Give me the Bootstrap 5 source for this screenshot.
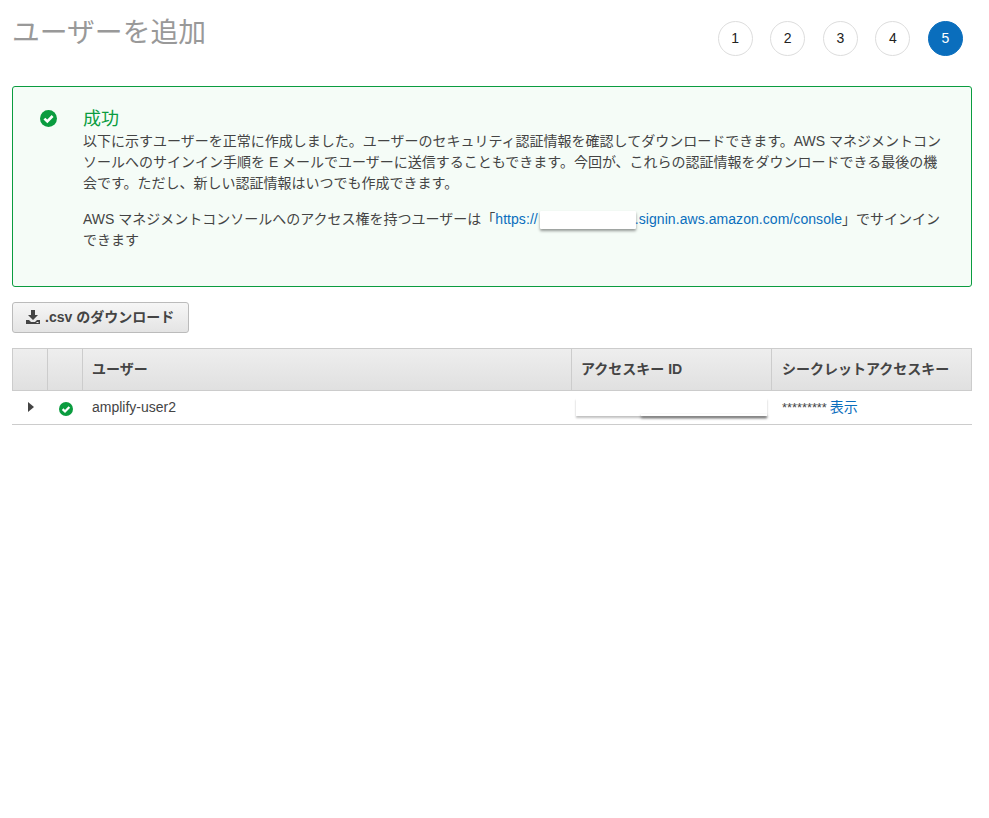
<!DOCTYPE html>
<html lang="ja">
<head>
<meta charset="utf-8">
<title>ユーザーを追加</title>
<link href="https://cdn.jsdelivr.net/npm/bootstrap@5.3.0/dist/css/bootstrap.min.css" rel="stylesheet">
<style>
body{font-family:"Liberation Sans","Noto Sans CJK JP",sans-serif;color:#444;font-size:14px;line-height:21px;background:#fff;}
.page-wrap{padding:0 17px 0 12px;}
.page-head{height:86px;}
.page-title{font-family:"Liberation Sans","Noto Sans CJK JP",sans-serif;font-size:27.8px;line-height:32px;font-weight:400;color:#999;margin:17px 0 0;}
.steps{gap:17.6px;margin:21px 9px 0 0;}
.step-dot{width:35px;height:35px;border-radius:50%;border:1px solid #ddd;background:#fff;color:#222;font-size:14px;}
.step-dot.on{background:#0a6ebd;border-color:#0a6ebd;color:#fff;}
.ok-box{height:201px;border:1px solid #0a9c3f;border-radius:3px;background:#f5fcf7;padding:20px 20px 0 0;}
.ok-icon{width:70px;padding:2px 0 0 27px;flex:none;margin-top:-2px;}
.ok-title{color:#0a9c3f;font-size:18px;line-height:24px;}
.ok-copy{margin:0 0 15px;width:860px;}
.aws-link{color:#0a6ebd;text-decoration:none;}
.url-link{letter-spacing:.06px;}
.mask-url{display:inline-block;width:96px;height:18px;margin:0 -1px 0 2px;background:#fff;vertical-align:-5px;box-shadow:0 2px 3px rgba(0,0,0,.4);border-radius:1px;}
.dl-btn{width:177px;height:31px;margin:15px 0;padding:0 0 0 12px;border:1px solid #bbb;border-radius:3px;background:linear-gradient(#f6f6f6,#e4e4e4);color:#444;font-size:14px;font-weight:700;}
.user-table{width:960px;table-layout:fixed;border-collapse:separate;border-spacing:0;margin:0;}
.col-a{width:36px;}
.col-b{width:35px;}
.col-c{width:489px;}
.col-d,.col-e{width:200px;}
.user-table th{height:43px;padding:0 10px;border:1px solid #ccc;border-left:0;background:linear-gradient(#eee,#e0e0e0);color:#444;font-weight:700;vertical-align:middle;}
.user-table th:first-child{border-left:1px solid #ccc;}
.user-table td{height:34px;padding:0 10px;border:0;border-bottom:1px solid #ccc;vertical-align:middle;color:#444;}
.user-table td.c-icon{padding:0;text-align:center;}
.user-table td.c-icon svg,.user-table td.c-icon .caret-r{margin-top:2px;}
.user-table td.c-icon .caret-r{margin-left:2px;}
.user-table .c-name{padding-left:9px;}
.key-wrap{position:relative;}
.mask-key{position:absolute;left:-5px;top:-10px;width:191px;height:18px;background:#fff;box-shadow:0 2px 2px rgba(0,0,0,.25);}
.mask-key::after{content:"";position:absolute;left:65px;right:0;bottom:0;height:2px;box-shadow:0 2px 3px rgba(0,0,0,.6);}
.stars{font-size:12.8px;margin-right:-1px;}
.caret-r{display:inline-block;border-style:solid;border-width:5px 0 5px 6px;border-color:transparent transparent transparent #444;}
</style>
</head>
<body>
<div class="page-wrap">
  <div class="page-head d-flex justify-content-between align-items-start">
    <h1 class="page-title">ユーザーを追加</h1>
    <div class="steps d-flex">
      <div class="step-dot d-flex align-items-center justify-content-center">1</div>
      <div class="step-dot d-flex align-items-center justify-content-center">2</div>
      <div class="step-dot d-flex align-items-center justify-content-center">3</div>
      <div class="step-dot d-flex align-items-center justify-content-center">4</div>
      <div class="step-dot on d-flex align-items-center justify-content-center">5</div>
    </div>
  </div>
  <div class="ok-box d-flex">
    <div class="ok-icon">
      <svg width="17" height="17" viewBox="0 0 17 17"><circle cx="8.5" cy="8.5" r="8.5" fill="#0a9c3f"/><path d="M4.4 8.6l2.9 2.9 5.3-5.5" fill="none" stroke="#fff" stroke-width="2.6"/></svg>
    </div>
    <div>
      <div class="ok-title">成功</div>
      <p class="ok-copy">以下に示すユーザーを正常に作成しました。ユーザーのセキュリティ認証情報を確認してダウンロードできます。AWS マネジメントコンソールへのサインイン手順を E メールでユーザーに送信することもできます。今回が、これらの認証情報をダウンロードできる最後の機会です。ただし、新しい認証情報はいつでも作成できます。</p>
      <p class="ok-copy">AWS マネジメントコンソールへのアクセス権を持つユーザーは「<a class="aws-link url-link" href="#">https://<span class="mask-url"></span>.signin.aws.amazon.com/console</a>」でサインイン<br>できます</p>
    </div>
  </div>
  <button type="button" class="dl-btn d-flex align-items-center gap-1">
    <svg width="16" height="15" viewBox="0 0 16 15"><path d="M6 0h4v5h3L8 10 3 5h3z" fill="#444"/><path d="M1 10h3l2 2h4l2-2h3v4H1z" fill="#444"/><rect x="11.5" y="12" width="2" height="1" fill="#eee"/></svg>
    <span>.csv のダウンロード</span>
  </button>
  <table class="user-table">
    <colgroup><col class="col-a"><col class="col-b"><col class="col-c"><col class="col-d"><col class="col-e"></colgroup>
    <thead><tr><th></th><th></th><th class="c-name">ユーザー</th><th class="c-name">アクセスキー ID</th><th>シークレットアクセスキー</th></tr></thead>
    <tbody><tr>
      <td class="c-icon"><span class="caret-r"></span></td>
      <td class="c-icon"><svg width="14" height="14" viewBox="0 0 17 17"><circle cx="8.5" cy="8.5" r="8.5" fill="#0a9c3f"/><path d="M4.4 8.6l2.9 2.9 5.3-5.5" fill="none" stroke="#fff" stroke-width="2.8"/></svg></td>
      <td class="c-name">amplify-user2</td>
      <td class="c-name"><div class="key-wrap"><div class="mask-key"></div></div></td>
      <td><span class="stars">*********</span> <a class="aws-link" href="#">表示</a></td>
    </tr></tbody>
  </table>
</div>
<script src="https://cdn.jsdelivr.net/npm/bootstrap@5.3.0/dist/js/bootstrap.bundle.min.js"></script>
</body>
</html>
